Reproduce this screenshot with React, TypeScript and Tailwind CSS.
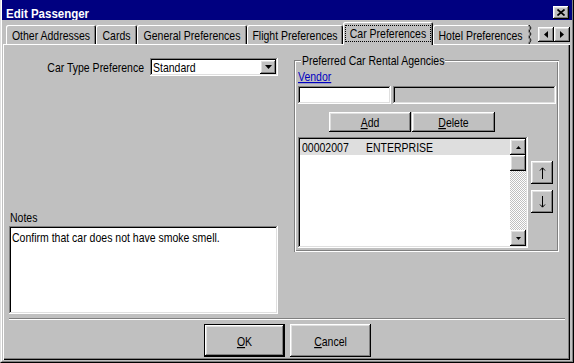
const raised =
  "shadow-[inset_-1px_-1px_#000,inset_1px_1px_#fff,inset_-2px_-2px_#808080,inset_2px_2px_#dfdfdf]";
const sunken =
  "shadow-[inset_-1px_-1px_#fff,inset_1px_1px_#808080,inset_-2px_-2px_#dfdfdf,inset_2px_2px_#000]";

// the dialog font is taller and narrower than Arial, stretch it a bit
function T({ children, className = "" }: { children: React.ReactNode; className?: string }) {
  return <span className={`inline-block scale-y-[1.2] ${className}`}>{children}</span>;
}

const tabs = [
  { label: "Other Addresses", w: "w-[90px]" },
  { label: "Cards", w: "w-[41px]" },
  { label: "General Preferences", w: "w-[110px]" },
  { label: "Flight Preferences", w: "w-[96px]" },
];

function Tri({ dir }: { dir: "up" | "down" | "left" | "right" }) {
  const pts = {
    down: "0,0 7,0 3.5,4",
    up: "0,4 7,4 3.5,0",
    left: "4,0 4,7 0,3.5",
    right: "0,0 0,7 4,3.5",
  }[dir];
  const big = dir === "left" || dir === "right";
  return (
    <svg width={big ? 4 : 7} height={big ? 7 : 4} viewBox={big ? "0 0 4 7" : "0 0 7 4"}>
      <polygon points={pts} fill="#000" />
    </svg>
  );
}

function Btn({ w, h, children, def }: { w: string; h: string; children: React.ReactNode; def?: boolean }) {
  const inner = (
    <div className={`flex items-center justify-center bg-[#c0c0c0] ${raised} ${def ? "w-full h-full" : `${w} ${h}`}`}>
      {children}
    </div>
  );
  if (def) return <div className={`border border-black ${w} ${h}`}>{inner}</div>;
  return inner;
}

export default function App() {
  return (
    <div className="w-[574px] h-[363px] bg-[#c0c0c0] overflow-hidden whitespace-nowrap text-black text-[10.5px] leading-[14px] font-['Liberation_Sans',Arial,sans-serif]">
      <div className="w-full h-full flex flex-col border-l border-l-[#dfdfdf] border-r border-r-black border-b border-b-black">
        <div className="flex-1 flex flex-col border-l border-l-white border-r border-r-[#808080] border-b border-b-[#808080]">
          {/* title bar */}
          <div className="h-[20px] shrink-0 bg-[#000080] flex items-center justify-between pl-[4px] pr-[3px] pt-[5px]">
            <span className="inline-block scale-y-[1.15] text-white font-bold text-[11.5px] leading-[14px]">
              Edit Passenger
            </span>
            <div className={`w-[16px] h-[13px] bg-[#c0c0c0] flex items-center justify-center ${raised}`}>
              <svg width="8" height="7" viewBox="0 0 8 7">
                <path d="M0.5 0.5 L7.5 6.5 M7.5 0.5 L0.5 6.5" stroke="#000" strokeWidth="1.7" />
              </svg>
            </div>
          </div>

          {/* tab strip */}
          <div className="h-[24px] shrink-0 flex items-end pl-[4px] pr-[2px]">
            {tabs.map((t) => (
              <div
                key={t.label}
                className={`${t.w} h-[19px] flex items-center justify-center rounded-t-[2px] shadow-[inset_1px_1px_#fff,inset_-1px_0_#000,inset_-2px_0_#808080]`}
              >
                <T>{t.label}</T>
              </div>
            ))}
            <div className="relative z-10 w-[90px] h-[23px] -mb-[1px] bg-[#c0c0c0] rounded-t-[2px] shadow-[inset_1px_1px_#fff,inset_-1px_0_#000,inset_-2px_0_#808080] px-[2px] pt-[3px] pb-[3px] flex">
              <div className="flex-1 border border-dotted border-black flex items-center justify-center pb-[1px]">
                <T>Car Preferences</T>
              </div>
            </div>
            <div className="w-[95px] h-[19px] flex items-center justify-center rounded-tl-[2px] shadow-[inset_1px_1px_#fff]">
              <T>Hotel Preferences</T>
            </div>
            <svg width="4" height="19" viewBox="0 0 4 19" className="shrink-0">
              <path d="M1 0 L3 3 L1 6 L3 9 L1 12 L3 15 L1 19" stroke="#000" fill="none" strokeWidth="1" />
              <path d="M0 0 L2 3 L0 6 L2 9 L0 12 L2 15 L0 19" stroke="#808080" fill="none" strokeWidth="1" />
            </svg>
            <div className="ml-auto mb-[2px] flex">
              <div className={`w-[16px] h-[15px] flex items-center justify-center ${raised}`}>
                <Tri dir="left" />
              </div>
              <div className={`w-[16px] h-[15px] flex items-center justify-center ${raised}`}>
                <Tri dir="right" />
              </div>
            </div>
          </div>

          {/* tab panel */}
          <div className="flex-1 ml-[1px] mr-[2px] mb-[1px] flex flex-col shadow-[inset_1px_1px_#fff,inset_-1px_-1px_#000,inset_-2px_-2px_#808080]">
            <div className="h-[274px] shrink-0 flex pl-[6px]">
              {/* left column */}
              <div className="w-[269px] flex flex-col">
                <div className="mt-[14px] h-[18px] flex items-center justify-end gap-[6px]">
                  <T>Car Type Preference</T>
                  <div className={`w-[128px] h-[18px] bg-white flex items-center justify-between pl-[3px] pr-[2px] ${sunken}`}>
                    <T>Standard</T>
                    <div className={`w-[16px] h-[14px] bg-[#c0c0c0] flex items-center justify-center ${raised}`}>
                      <Tri dir="down" />
                    </div>
                  </div>
                </div>
                <div className="mt-auto mb-[4px]">
                  <div className="pl-[1px] mb-[2px]">
                    <T>Notes</T>
                  </div>
                  <div className={`h-[88px] bg-white pl-[3px] pt-[4px] ${sunken}`}>
                    <T>Confirm that car does not have smoke smell.</T>
                  </div>
                </div>
              </div>

              {/* right column: group box */}
              <div className="ml-[16px] mt-[16px] w-[265px] h-[192px] relative pl-[4px] shadow-[inset_1px_1px_#808080,inset_-1px_-1px_#fff,inset_2px_2px_#fff,inset_-2px_-2px_#808080]">
                <span className="absolute left-[7px] -top-[7px] px-[1px] bg-[#c0c0c0]">
                  <T>Preferred Car Rental Agencies</T>
                </span>
                <div className="mt-[9px] h-[14px] text-[#0000c0]">
                  <T className="underline">Vendor</T>
                </div>
                <div className="mt-[3px] flex gap-[2px]">
                  <div className={`w-[93px] h-[18px] bg-white ${sunken}`} />
                  <div className={`w-[163px] h-[18px] bg-[#c0c0c0] ${sunken}`} />
                </div>
                <div className="mt-[8px] ml-[31px] flex gap-[1px]">
                  <Btn w="w-[82px]" h="h-[20px]">
                    <T>
                      <span className="underline">A</span>dd
                    </T>
                  </Btn>
                  <Btn w="w-[83px]" h="h-[20px]">
                    <T>
                      <span className="underline">D</span>elete
                    </T>
                  </Btn>
                </div>
                <div className="mt-[5px] flex gap-[3px]">
                  <div className={`w-[230px] h-[111px] bg-white p-[2px] flex ${sunken}`}>
                    <div className="flex-1">
                      <div className="h-[16px] bg-[#dedede] flex items-center pl-[2px]">
                        <T className="w-[64px]">00002007</T>
                        <T>ENTERPRISE</T>
                      </div>
                    </div>
                    <div className="w-[16px] flex flex-col">
                      <div className={`h-[16px] bg-[#c0c0c0] flex items-center justify-center ${raised}`}>
                        <svg width="5" height="3" viewBox="0 0 5 3">
                          <polygon points="0,3 5,3 2.5,0" fill="#000" />
                        </svg>
                      </div>
                      <div className={`h-[16px] bg-[#c0c0c0] ${raised}`} />
                      <div className="flex-1 bg-[repeating-conic-gradient(#c0c0c0_0%_25%,#fff_0%_50%)] bg-[length:2px_2px]" />
                      <div className={`h-[16px] bg-[#c0c0c0] flex items-center justify-center ${raised}`}>
                        <svg width="5" height="3" viewBox="0 0 5 3">
                          <polygon points="0,0 5,0 2.5,3" fill="#000" />
                        </svg>
                      </div>
                    </div>
                  </div>
                  <div className="mt-[24px] flex flex-col gap-[6px]">
                    <Btn w="w-[22px]" h="h-[23px]">
                      <svg width="7" height="12" viewBox="0 0 7 12">
                        <path d="M3.5 1 V12 M1 3.5 L3.5 0.8 L6 3.5" stroke="#000" fill="none" strokeWidth="1" />
                      </svg>
                    </Btn>
                    <Btn w="w-[22px]" h="h-[23px]">
                      <svg width="7" height="12" viewBox="0 0 7 12">
                        <path d="M3.5 0 V11 M1 8.5 L3.5 11.2 L6 8.5" stroke="#000" fill="none" strokeWidth="1" />
                      </svg>
                    </Btn>
                  </div>
                </div>
              </div>
            </div>

            {/* separator */}
            <div className="ml-[6px] mr-[5px] h-[2px] border-t border-t-[#808080] border-b border-b-white" />

            {/* dialog buttons */}
            <div className="mt-[4px] flex justify-center gap-[5px] pl-[2px]">
              <Btn w="w-[81px]" h="h-[33px]" def>
                <T>
                  <span className="underline">O</span>K
                </T>
              </Btn>
              <Btn w="w-[81px]" h="h-[33px]">
                <T>
                  <span className="underline">C</span>ancel
                </T>
              </Btn>
            </div>
          </div>
        </div>
      </div>
    </div>
  );
}
